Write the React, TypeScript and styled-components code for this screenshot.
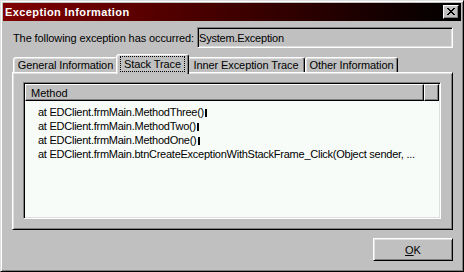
import styled, { createGlobalStyle } from "styled-components";

const GlobalStyle = createGlobalStyle`
  * {
    box-sizing: border-box;
  }

  html,
  body {
    margin: 0;
    padding: 0;
    background: #c0c0c0;
  }

  body {
    font-family: "Liberation Sans", Arial, sans-serif;
    font-size: 11px;
    color: #000;
  }
`;

const Window = styled.div`
  width: 464px;
  height: 272px;
  display: flex;
  flex-direction: column;
  background: #c0c0c0;
  border: 1px solid;
  border-color: #dfdfdf #000 #000 #dfdfdf;
  box-shadow: inset 1px 1px #fff, inset -1px -1px #808080;
  padding: 2px;
`;

const TitleBar = styled.div`
  height: 18px;
  flex-shrink: 0;
  display: flex;
  align-items: center;
  justify-content: space-between;
  padding: 0 2px 0 2px;
  background: linear-gradient(to right, #800000, #000000);
  color: #fff;
  font-weight: bold;
  font-size: 11px;
`;

const TitleText = styled.span`
  line-height: 18px;
  letter-spacing: 0.4px;
`;

const CloseButton = styled.div`
  width: 16px;
  height: 14px;
  display: flex;
  align-items: center;
  justify-content: center;
  background: #c0c0c0;
  border: 1px solid;
  border-color: #fff #000 #000 #fff;
  box-shadow: inset -1px -1px #808080;
  padding-bottom: 1px;
`;

const Body = styled.div`
  flex: 1;
  display: flex;
  flex-direction: column;
  padding: 6px 8px 7px 9px;
`;

const InfoRow = styled.div`
  display: flex;
  align-items: center;
  height: 21px;
`;

const Label = styled.span`
  flex: 1;
  padding-left: 1px;
  white-space: nowrap;
  letter-spacing: -0.1px;
`;

const ReadOnlyBox = styled.div`
  width: 256px;
  height: 21px;
  display: flex;
  align-items: center;
  padding-left: 1px;
  background: #c0c0c0;
  border: 1px solid;
  border-color: #808080 #fff #fff #808080;
  box-shadow: inset 1px 1px #000, inset -1px -1px #dfdfdf;
  letter-spacing: -0.2px;
`;

const TabStrip = styled.div`
  position: relative;
  z-index: 2;
  display: flex;
  align-items: flex-end;
  height: 20px;
  margin-top: 6px;
  margin-bottom: -2px;
  padding-left: 1px;
`;

const Tab = styled.div<{ $active?: boolean; $width: number }>`
  width: ${(p) => p.$width + (p.$active ? 4 : 0)}px;
  height: ${(p) => (p.$active ? 20 : 15)}px;
  margin: ${(p) => (p.$active ? "0 -2px" : "0 0 2px 0")};
  position: relative;
  z-index: ${(p) => (p.$active ? 2 : 1)};
  display: flex;
  align-items: ${(p) => (p.$active ? "flex-start" : "center")};
  justify-content: center;
  padding-top: ${(p) => (p.$active ? "2px" : "0")};
  background: #c0c0c0;
  border: 1px solid;
  border-bottom: none;
  border-color: #fff #000 transparent #fff;
  border-radius: 3px 3px 0 0;
  box-shadow: inset -1px 0 #808080, inset 1px 1px #dfdfdf;
  white-space: nowrap;
  letter-spacing: -0.1px;
`;

const FocusText = styled.span`
  outline: 1px dotted #000;
  outline-offset: 0;
  padding: 0 3px;
  line-height: 14px;
`;

const TabPanel = styled.div`
  position: relative;
  z-index: 1;
  height: 158px;
  display: flex;
  flex-direction: column;
  padding: 9px 11px 10px 10px;
  background: #c0c0c0;
  border: 1px solid;
  border-color: #fff #000 #000 #fff;
  box-shadow: inset 1px 1px #dfdfdf, inset -1px -1px #808080;
`;

const ListView = styled.div`
  flex: 1;
  display: flex;
  flex-direction: column;
  background: #f8fcf8;
  border: 1px solid;
  border-color: #808080 #fff #fff #808080;
  box-shadow: inset 1px 1px #000, inset -1px -1px #dfdfdf;
  padding: 1px;
  overflow: hidden;
`;

const HeaderRow = styled.div`
  display: flex;
  height: 17px;
  flex-shrink: 0;
`;

const HeaderCell = styled.div<{ $grow?: boolean; $width?: number }>`
  ${(p) => (p.$grow ? "flex: 1;" : `width: ${p.$width}px;`)}
  display: flex;
  align-items: center;
  padding-left: 5px;
  background: #c0c0c0;
  border: 1px solid;
  border-color: #fff #000 #000 #fff;
  box-shadow: inset -1px -1px #808080;
`;

const Rows = styled.div`
  display: flex;
  flex-direction: column;
  padding: 4px 0 0 13px;
`;

const Row = styled.div`
  height: 14px;
  line-height: 14px;
  white-space: nowrap;
  letter-spacing: -0.25px;
`;

const LineBreakMark = styled.span`
  display: inline-block;
  width: 2px;
  height: 8px;
  margin-left: 1px;
  background: #000;
  vertical-align: -1px;
`;

const Footer = styled.div`
  display: flex;
  justify-content: flex-end;
  margin-top: 8px;
`;

const Button = styled.div`
  width: 80px;
  height: 23px;
  display: flex;
  align-items: center;
  justify-content: center;
  background: #c0c0c0;
  border: 1px solid;
  border-color: #fff #000 #000 #fff;
  box-shadow: inset 1px 1px #dfdfdf, inset -1px -1px #808080;

  u {
    text-decoration: underline;
    text-underline-offset: 1px;
  }
`;

const CloseGlyph = () => {
  const pixels = [
    "XX....XX",
    ".XX..XX.",
    "..XXXX..",
    "...XX...",
    "..XXXX..",
    ".XX..XX.",
    "XX....XX",
  ];
  let d = "";
  pixels.forEach((row, y) =>
    row.split("").forEach((c, x) => {
      if (c === "X") d += `M${x} ${y}h1v1h-1z`;
    })
  );
  return (
    <svg width="8" height="7" viewBox="0 0 8 7" shapeRendering="crispEdges">
      <path d={d} fill="#000" />
    </svg>
  );
};

const traceLines = [
  { text: "at EDClient.frmMain.MethodThree()", mark: true },
  { text: "at EDClient.frmMain.MethodTwo()", mark: true },
  { text: "at EDClient.frmMain.MethodOne()", mark: true },
  {
    text: "at EDClient.frmMain.btnCreateExceptionWithStackFrame_Click(Object sender, ...",
    mark: false,
  },
];

const tabs = [
  { label: "General Information", width: 105 },
  { label: "Stack Trace", width: 69, active: true },
  { label: "Inner Exception Trace", width: 118 },
  { label: "Other Information", width: 93 },
];

const App = () => {
  return (
    <>
      <GlobalStyle />
      <Window>
        <TitleBar>
          <TitleText>Exception Information</TitleText>
          <CloseButton>
            <CloseGlyph />
          </CloseButton>
        </TitleBar>

        <Body>
          <InfoRow>
            <Label>The following exception has occurred:</Label>
            <ReadOnlyBox>System.Exception</ReadOnlyBox>
          </InfoRow>

          {/* Tabs */}
          <TabStrip>
            {tabs.map((t) => (
              <Tab key={t.label} $width={t.width} $active={t.active}>
                {t.active ? <FocusText>{t.label}</FocusText> : t.label}
              </Tab>
            ))}
          </TabStrip>

          <TabPanel>
            <ListView>
              <HeaderRow>
                <HeaderCell $width={399}>Method</HeaderCell>
                <HeaderCell $grow />
              </HeaderRow>
              <Rows>
                {traceLines.map((l) => (
                  <Row key={l.text}>
                    {l.text}
                    {l.mark && <LineBreakMark />}
                  </Row>
                ))}
              </Rows>
            </ListView>
          </TabPanel>

          <Footer>
            <Button>
              <span>
                <u>O</u>K
              </span>
            </Button>
          </Footer>
        </Body>
      </Window>
    </>
  );
};

export default App;
